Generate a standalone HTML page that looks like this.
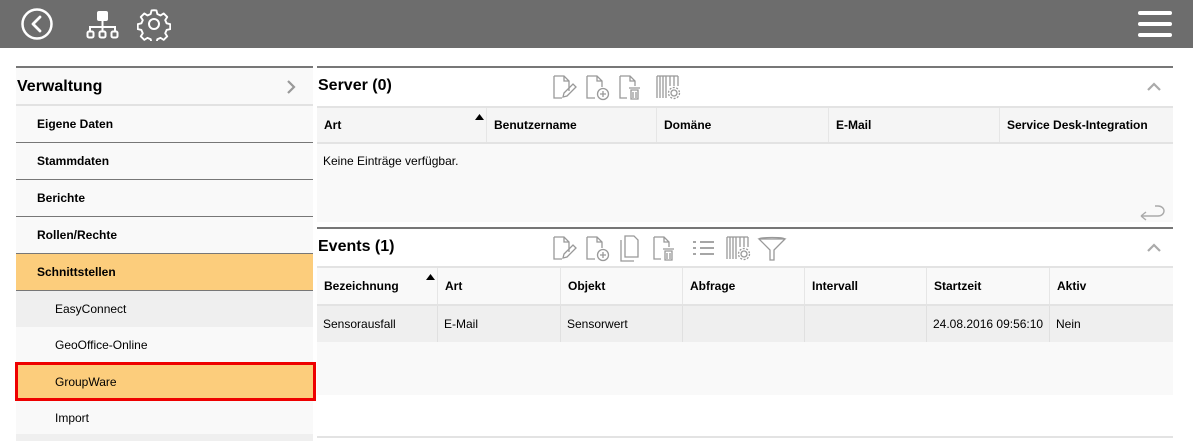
<!DOCTYPE html>
<html><head><meta charset="utf-8"><style>
*{margin:0;padding:0;box-sizing:border-box}
body{width:1193px;height:441px;background:#fff;font-family:"Liberation Sans",Arial,sans-serif;position:relative;overflow:hidden;color:#000}
.a{position:absolute}
.hdr{left:0;top:0;width:1193px;height:48px;background:#6d6d6d}
.item{position:absolute;left:16px;width:297px;font-size:12px;font-weight:bold;padding-left:21px;display:flex;align-items:center;background:#f9f9f9;border-bottom:1px solid #777}
.sub{position:absolute;left:16px;width:297px;font-size:12px;padding-left:39px;display:flex;align-items:center}
.th{position:absolute;font-size:12px;font-weight:bold;display:flex;align-items:center;padding-left:7px;border-right:1px solid #e6e6e6;height:100%;top:0}
.td{position:absolute;font-size:12px;display:flex;align-items:center;padding-left:6px;border-right:1px solid #e0e0e0;height:100%;top:0}
.ttl{font-size:16px;font-weight:bold}
</style></head><body>
<div class="a hdr"></div>
<svg class="a" style="left:19px;top:8px" width="36" height="32" viewBox="0 0 36 32"><circle cx="18" cy="16" r="14.5" fill="none" stroke="#fff" stroke-width="2.5"/><path d="M21 9 L14 16 L21 23" fill="none" stroke="#fff" stroke-width="2.8" stroke-linecap="round" stroke-linejoin="round"/></svg>
<svg class="a" style="left:86px;top:10px" width="34" height="30" viewBox="0 0 34 30"><rect x="11" y="1" width="11" height="10" rx="2" fill="#fff"/><path d="M16.5 11v6M4 21v-4h25v4M16.5 17v4" stroke="#fff" stroke-width="2" fill="none"/><rect x="1.5" y="21.5" width="6" height="6" rx="1.5" fill="none" stroke="#fff" stroke-width="2"/><rect x="13.5" y="21.5" width="6" height="6" rx="1.5" fill="none" stroke="#fff" stroke-width="2"/><rect x="25.5" y="21.5" width="6" height="6" rx="1.5" fill="none" stroke="#fff" stroke-width="2"/></svg>
<svg class="a" style="left:137px;top:7px" width="34" height="34" viewBox="0 0 34 34"><path d="M17 2.5l2.6.2.9 3.8 3.4 1.5 3.3-2.1 3.7 3.7-2.1 3.3 1.5 3.4 3.8.9v5.2l-3.8.9-1.5 3.4 2.1 3.3-3.7 3.7-3.3-2.1-3.4 1.5-.9 3.8h-5.2l-.9-3.8-3.4-1.5-3.3 2.1-3.7-3.7 2.1-3.3-1.5-3.4-3.8-.9v-5.2l3.8-.9 1.5-3.4-2.1-3.3 3.7-3.7 3.3 2.1 3.4-1.5.9-3.8z" transform="translate(17 17) scale(.95) translate(-17 -17)" fill="#6d6d6d" stroke="#fff" stroke-width="2" stroke-linejoin="round"/><circle cx="17" cy="17" r="5" fill="none" stroke="#fff" stroke-width="2"/></svg>
<div class="a" style="left:1138px;top:11px;width:34px;height:4px;background:#fff;border-radius:2px"></div>
<div class="a" style="left:1138px;top:22px;width:34px;height:4px;background:#fff;border-radius:2px"></div>
<div class="a" style="left:1138px;top:33px;width:34px;height:4px;background:#fff;border-radius:2px"></div>

<div class="a" style="left:16px;top:66px;width:297px;height:2px;background:#777"></div>
<div class="a" style="left:16px;top:68px;width:297px;height:38px;background:#f9f9f9;border-bottom:2px solid #e2e2e2;font-size:16px;font-weight:bold;padding-left:1px;padding-top:2px;display:flex;align-items:center">Verwaltung</div>
<svg class="a" style="left:285px;top:79px" width="12" height="16" viewBox="0 0 12 16"><path d="M3 2l6 6-6 6" fill="none" stroke="#999" stroke-width="2.2"/></svg>
<div class="item" style="top:106px;height:37px">Eigene Daten</div>
<div class="item" style="top:143px;height:37px">Stammdaten</div>
<div class="item" style="top:180px;height:37px">Berichte</div>
<div class="item" style="top:217px;height:37px">Rollen/Rechte</div>
<div class="item" style="top:254px;height:37px;background:#fccd7c">Schnittstellen</div>
<div class="sub" style="top:291px;height:36px;background:#efefef">EasyConnect</div>
<div class="sub" style="top:327px;height:35px;background:#f9f9f9">GeoOffice-Online</div>
<div class="sub" style="top:362px;height:39px;background:#fccd7c;border:3px solid #e00;left:15px;width:301px;padding-left:37px">GroupWare</div>
<div class="sub" style="top:401px;height:33px;background:#f9f9f9">Import</div>
<div class="a" style="left:16px;top:434px;width:297px;height:7px;background:#efefef"></div>

<div class="a" style="left:317px;top:66px;width:856px;height:2px;background:#777"></div>
<div class="a ttl" style="left:318px;top:77px">Server (0)</div>
<svg class="a" style="left:550px;top:73px" width="135" height="28" viewBox="0 0 135 28" fill="none" stroke="#999" stroke-width="1.3">
<path d="M4 3h10l5 5v10M4 3v22h8"/><path d="M14 3v5h5M13 24l1-4 9-9 3 3-9 9z"/>
<path d="M37 3h10l5 5v6M37 3v22h8M47 3v5h5"/><circle cx="53" cy="21" r="5.5"/><path d="M53 18v6M50 21h6"/>
<path d="M70 3h10l5 5v5M70 3v22h7M80 3v5h5"/><path d="M79 15h11M81 17h7v9h-7z M83 19v6M86 19v6"/>
<path d="M107 3v22M110 3v22M113 3v22M116 3v22M120 3v10M124 3v10M128 3v10M107 3h21"/><circle cx="124" cy="20" r="3"/><circle cx="124" cy="20" r="5.5" stroke-dasharray="2 1.5"/>
</svg>
<svg class="a" style="left:1146px;top:80px" width="16" height="12" viewBox="0 0 16 12"><path d="M2 10l6-6 6 6" fill="none" stroke="#aaa" stroke-width="2.2"/></svg>
<div class="a" style="left:317px;top:106px;width:856px;height:38px;background:#f5f5f5;border-top:2px solid #e3e3e3;border-bottom:2px solid #e3e3e3">
<div class="th" style="left:0;width:170px">Art</div>
<svg class="a" style="left:158px;top:6px" width="9" height="6"><path d="M0 6L4.5 0 9 6z" fill="#000"/></svg>
<div class="th" style="left:170px;width:170px">Benutzername</div>
<div class="th" style="left:340px;width:172px">Domäne</div>
<div class="th" style="left:512px;width:171px">E-Mail</div>
<div class="th" style="left:683px;width:173px;border-right:none">Service Desk-Integration</div>
</div>
<div class="a" style="left:317px;top:144px;width:856px;height:78px;background:#f9f9f9;font-size:12px;padding:10px 0 0 6px">Keine Einträge verfügbar.</div>
<svg class="a" style="left:1138px;top:199px" width="28" height="22" viewBox="0 0 28 22"><path d="M3 17h17a6 5 0 0 0 0-10h-3M3 17l5-4M3 17l5 4" fill="none" stroke="#aaa" stroke-width="1.4"/></svg>

<div class="a" style="left:317px;top:227px;width:856px;height:2px;background:#777"></div>
<div class="a ttl" style="left:318px;top:238px">Events (1)</div>
<svg class="a" style="left:550px;top:234px" width="240" height="30" viewBox="0 0 240 30" fill="none" stroke="#999" stroke-width="1.3">
<path d="M4 3h10l5 5v10M4 3v22h8"/><path d="M14 3v5h5M13 24l1-4 9-9 3 3-9 9z"/>
<path d="M37 3h10l5 5v6M37 3v22h8M47 3v5h5"/><circle cx="53" cy="21" r="5.5"/><path d="M53 18v6M50 21h6"/>
<path d="M75 2h9l4 4v17H75zM71 6v21h13"/>
<path d="M104 3h10l5 5v5M104 3v22h7M114 3v5h5"/><path d="M113 15h11M115 17h7v9h-7zM117 19v6M120 19v6"/>
<path d="M143 8h3M143 14h3M143 20h3M150 8h14M150 14h14M150 20h14" stroke-width="1.8"/>
<path d="M177 3v22M180 3v22M183 3v22M186 3v22M190 3v10M194 3v10M198 3v10M177 3h21"/><circle cx="194" cy="20" r="3"/><circle cx="194" cy="20" r="5.5" stroke-dasharray="2 1.5"/>
<path d="M209 5h26l-11 11v10h-4V16zM209 5c0-2 26-2 26 0"/>
</svg>
<svg class="a" style="left:1146px;top:241px" width="16" height="12" viewBox="0 0 16 12"><path d="M2 10l6-6 6 6" fill="none" stroke="#aaa" stroke-width="2.2"/></svg>
<div class="a" style="left:317px;top:266px;width:856px;height:40px;background:#f9f9f9;border-top:2px solid #e3e3e3;border-bottom:2px solid #e3e3e3">
<div class="th" style="left:0;width:121px">Bezeichnung</div>
<svg class="a" style="left:109px;top:6px" width="9" height="6"><path d="M0 6L4.5 0 9 6z" fill="#000"/></svg>
<div class="th" style="left:121px;width:123px">Art</div>
<div class="th" style="left:244px;width:122px">Objekt</div>
<div class="th" style="left:366px;width:122px">Abfrage</div>
<div class="th" style="left:488px;width:122px">Intervall</div>
<div class="th" style="left:610px;width:123px">Startzeit</div>
<div class="th" style="left:733px;width:123px;border-right:none">Aktiv</div>
</div>
<div class="a" style="left:317px;top:306px;width:856px;height:36px;background:#efefef">
<div class="td" style="left:0;width:121px">Sensorausfall</div>
<div class="td" style="left:121px;width:123px">E-Mail</div>
<div class="td" style="left:244px;width:122px">Sensorwert</div>
<div class="td" style="left:366px;width:122px"></div>
<div class="td" style="left:488px;width:122px"></div>
<div class="td" style="left:610px;width:123px">24.08.2016 09:56:10</div>
<div class="td" style="left:733px;width:123px;border-right:none">Nein</div>
</div>
<div class="a" style="left:317px;top:342px;width:856px;height:53px;background:#f9f9f9"></div>
<div class="a" style="left:317px;top:436px;width:856px;height:2px;background:#e3e3e3"></div>
</body></html>
